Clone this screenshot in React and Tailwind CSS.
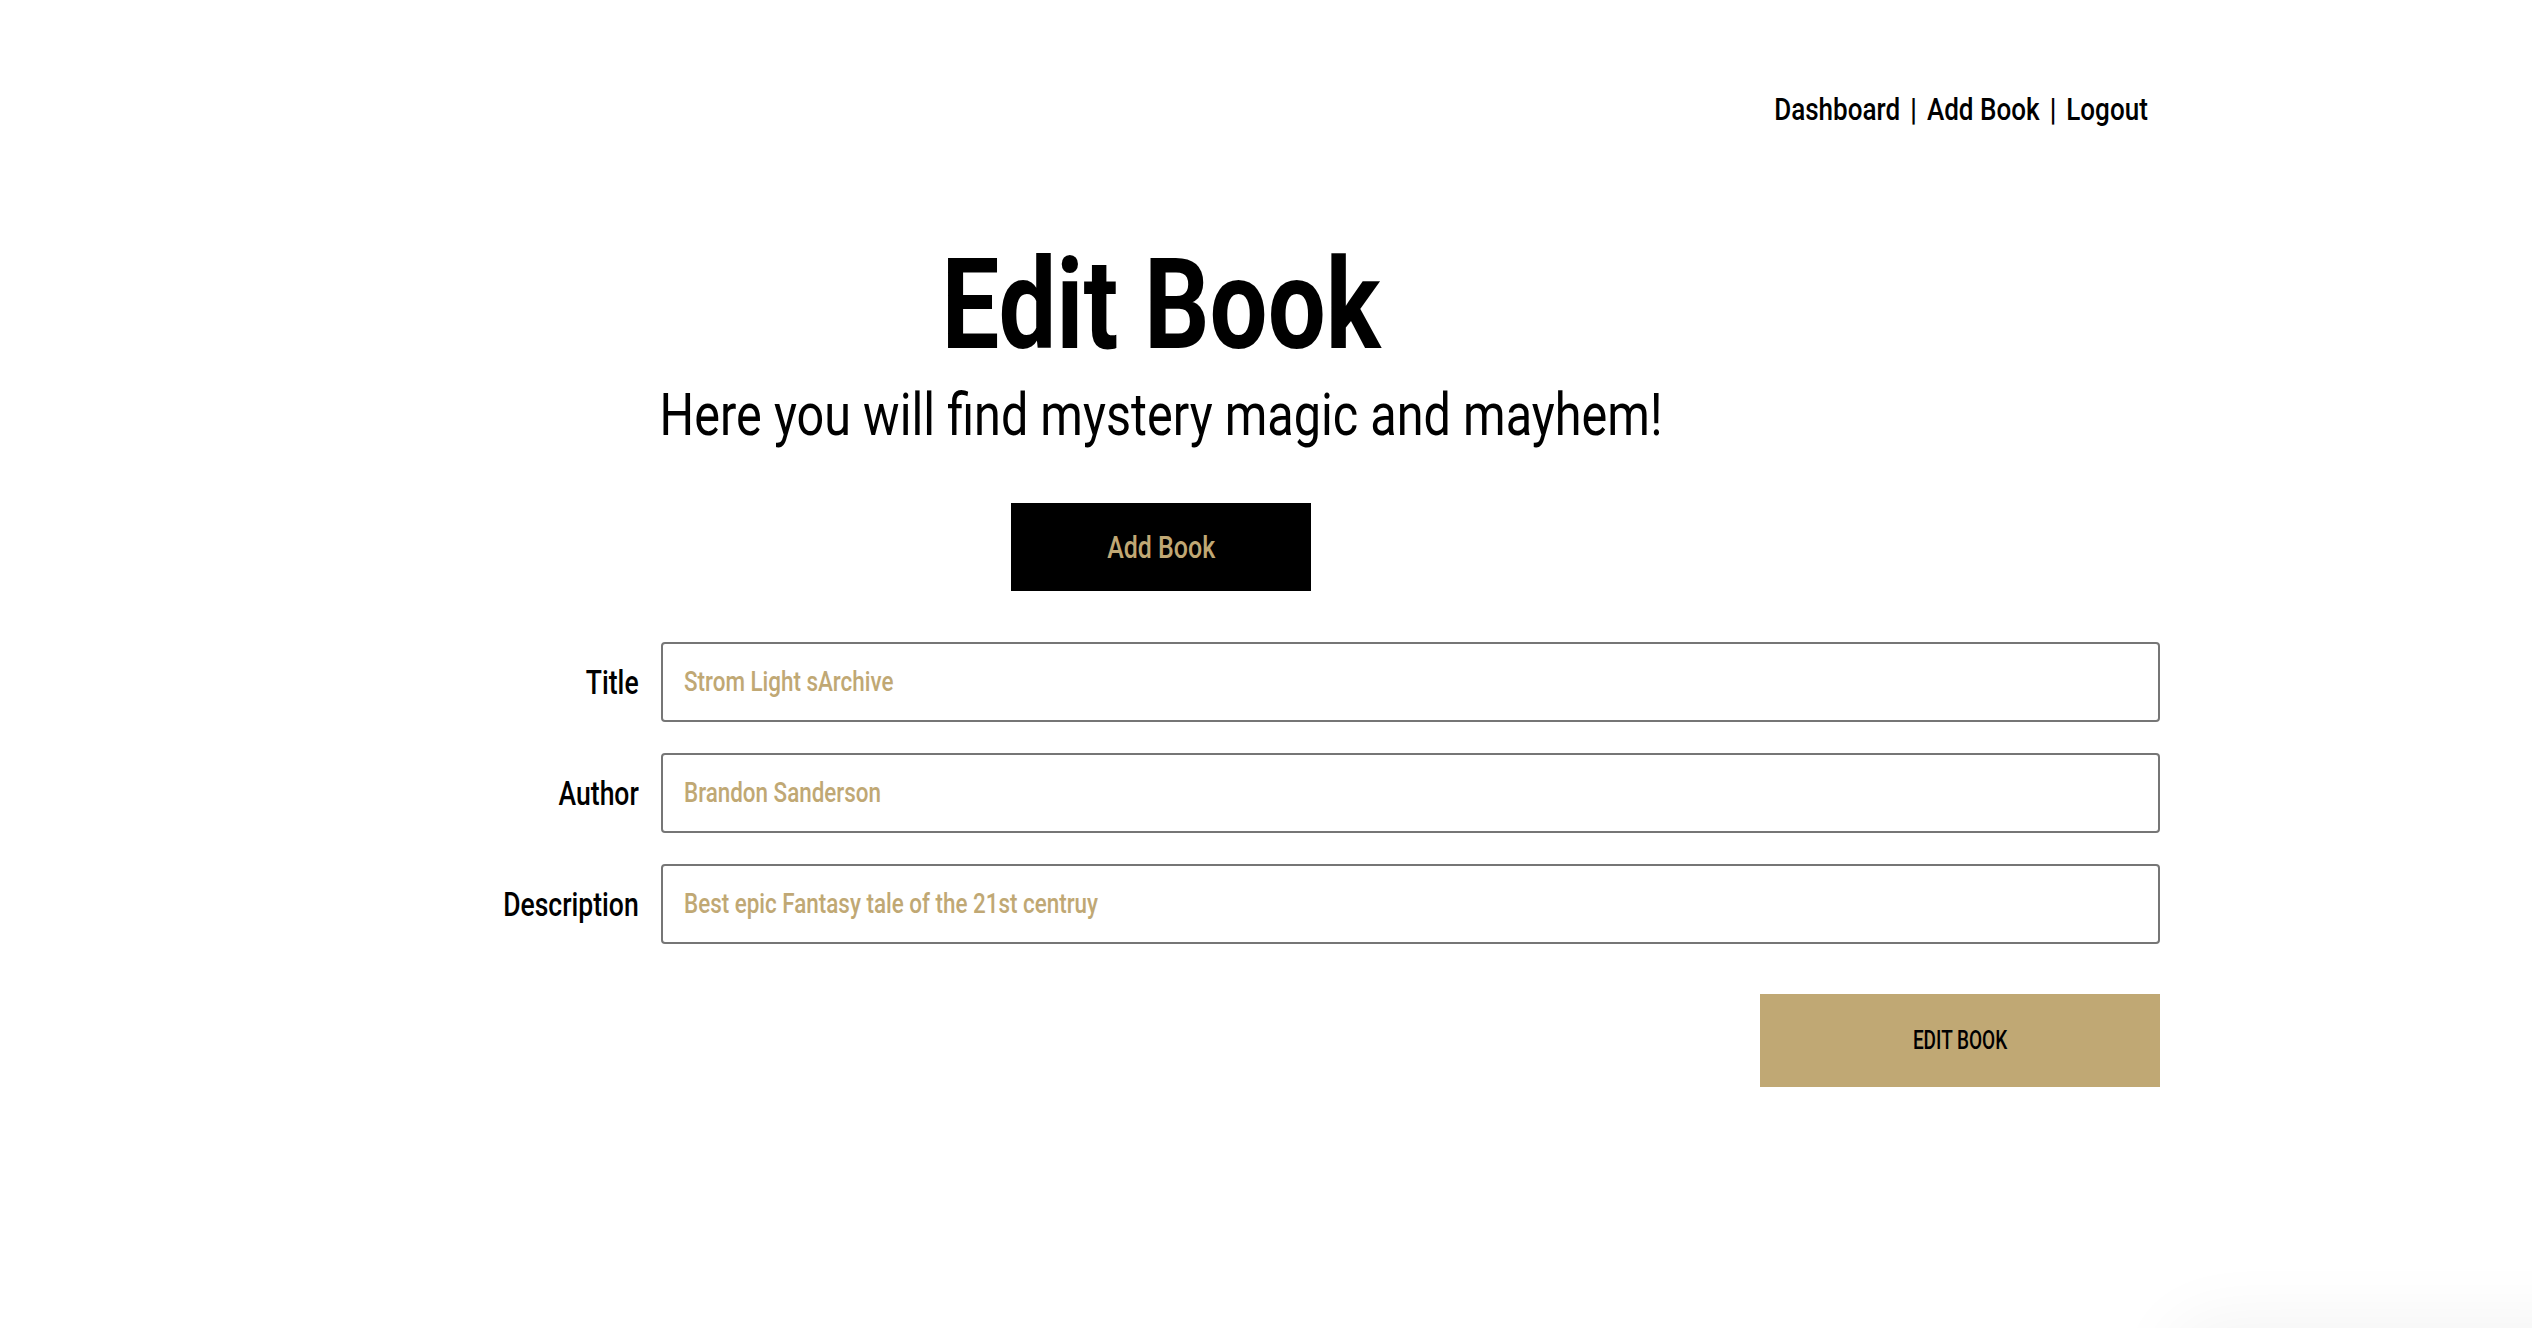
const font = "font-['Roboto','Liberation_Sans',sans-serif]";

function Field({ label, value }) {
  return (
    <div className="flex items-center gap-[22px]">
      <label className="w-[477px] text-right text-[34px] font-medium leading-none text-black">
        <span className="inline-block origin-right scale-x-[0.78]">{label}</span>
      </label>
      <div className="flex h-[80px] flex-1 items-center rounded-[4px] border-2 border-[#767676] pl-[21px] text-[27px] font-medium leading-none text-[#c0a874]">
        <span className="inline-block origin-left scale-x-[0.83] whitespace-nowrap">{value}</span>
      </div>
    </div>
  );
}

export default function App() {
  return (
    <div className={`relative h-[1328px] w-[2532px] overflow-hidden bg-white ${font}`}>
      <div className="ml-[162px] w-[1998px]">
        <nav className="flex justify-end pr-[12px] pt-[94px] text-[31px] font-medium leading-none text-black">
          <span className="inline-flex origin-right scale-x-[0.84] items-baseline gap-[12px] whitespace-nowrap">
            <span>Dashboard</span>
            <span className="font-bold">|</span>
            <span>Add Book</span>
            <span className="font-bold">|</span>
            <span>Logout</span>
          </span>
        </nav>
        <div className="flex flex-col items-center pt-[116px]">
          <h1 className="text-[127px] font-bold leading-none">
            <span className="inline-block scale-x-[0.81] whitespace-nowrap">Edit Book</span>
          </h1>
          <p className="mt-[17px] text-[60px] leading-none">
            <span className="inline-block scale-x-[0.81] whitespace-nowrap">Here you will find mystery magic and mayhem!</span>
          </p>
          <button className="mt-[58px] h-[88px] w-[300px] bg-black text-[32px] font-medium leading-none text-[#c0a874]">
            <span className="inline-block scale-x-[0.78]">Add Book</span>
          </button>
        </div>
        <div className="mt-[51px] flex flex-col gap-[31px]">
          <Field label="Title" value="Strom Light sArchive" />
          <Field label="Author" value="Brandon Sanderson" />
          <Field label="Description" value="Best epic Fantasy tale of the 21st centruy" />
        </div>
        <div className="mt-[50px] flex justify-end">
          <button className="h-[93px] w-[400px] bg-[#c0a874] text-[25px] font-medium leading-none text-black">
            <span className="inline-block scale-x-[0.76]">EDIT BOOK</span>
          </button>
        </div>
      </div>
      <div className="absolute left-[2190px] top-[1340px] h-[200px] w-[420px] rounded-[24px] bg-white shadow-[0_0_70px_20px_rgba(0,0,0,0.05)]" />
    </div>
  );
}
